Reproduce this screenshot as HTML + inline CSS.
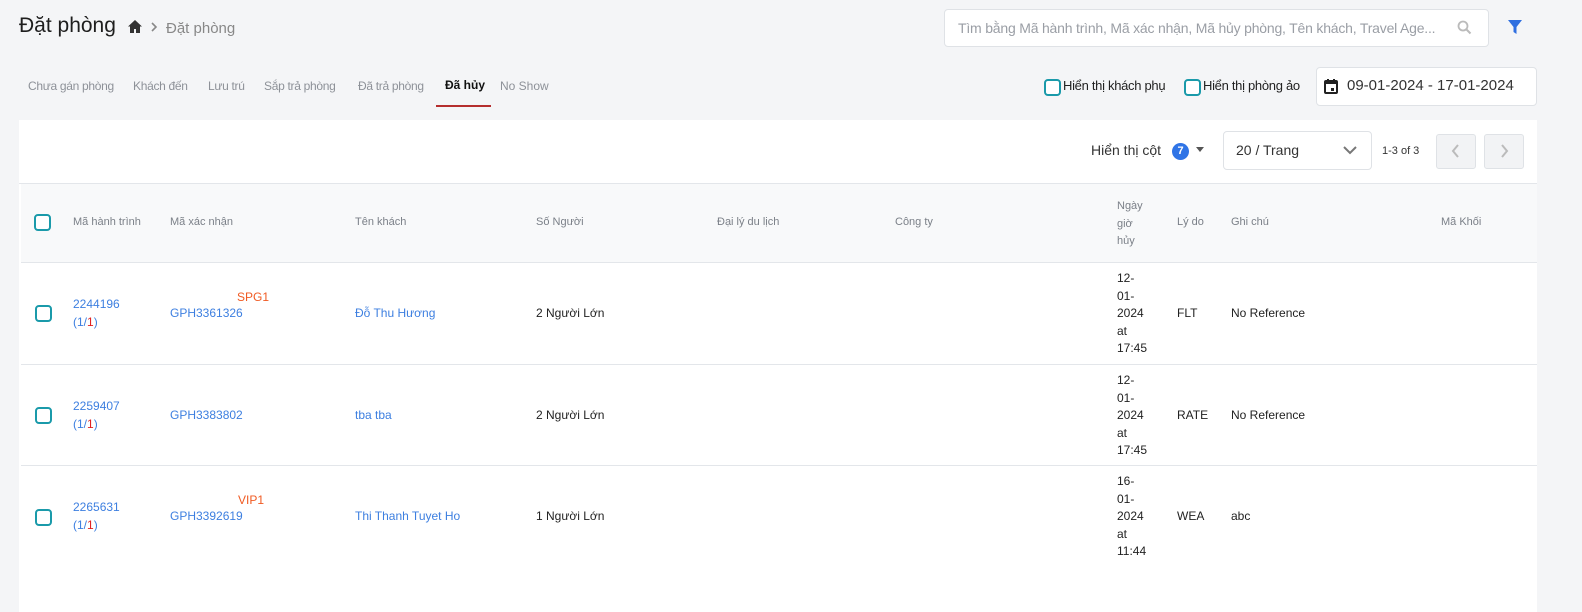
<!DOCTYPE html><html><head><meta charset="utf-8"><style>
*{box-sizing:border-box;margin:0;padding:0}
body{width:1582px;height:612px;overflow:hidden;background:#f4f5f7;font-family:"Liberation Sans",sans-serif;color:#222;position:relative}
.a{position:absolute;white-space:nowrap}
.cb{position:absolute;width:17px;height:17px;border:2px solid #1a9aaa;border-radius:4px;background:#fff}
.h{font-size:11px;color:#7b8088}
.t{font-size:12px;color:#222}
.lnk{color:#3d7fe0}
.line{position:absolute;left:21px;width:1516px;height:1px;background:#e3e6ea}
.cell{font-size:12px;line-height:17.5px}
</style></head><body>
<div class="a" style="left:19px;top:14px;font-size:21px;color:#1e1e1e">Đặt phòng</div>
<svg class="a" style="left:128px;top:20px" width="14" height="13" viewBox="0 0 14 13"><path d="M7 0L0 6.5h2V13h4V9h2v4h4V6.5h2z" fill="#333"/></svg>
<svg class="a" style="left:150px;top:22px" width="8" height="10" viewBox="0 0 8 10"><path d="M2 1l4 4-4 4" stroke="#888" stroke-width="1.6" fill="none"/></svg>
<div class="a" style="left:166px;top:20px;font-size:15px;color:#888">Đặt phòng</div>
<div class="a" style="left:944px;top:9px;width:545px;height:38px;background:#fff;border:1px solid #dfe2e6;border-radius:4px"></div>
<div class="a" style="left:958px;top:20px;font-size:14px;color:#9a9ea5;letter-spacing:-0.2px">Tìm bằng Mã hành trình, Mã xác nhận, Mã hủy phòng, Tên khách, Travel Age...</div>
<svg class="a" style="left:1457px;top:20px" width="15" height="15" viewBox="0 0 15 15"><circle cx="6" cy="6" r="4.5" stroke="#bbb" stroke-width="1.8" fill="none"/><path d="M9.5 9.5l4 4" stroke="#bbb" stroke-width="2"/></svg>
<svg class="a" style="left:1508px;top:20px" width="14" height="14" viewBox="0 0 14 14"><path d="M0 0h14L8.5 7v7l-3-2V7z" fill="#2f6fe0"/></svg>
<div class="a" style="left:28px;top:79px;font-size:12px;color:#8d9198;letter-spacing:-0.3px">Chưa gán phòng</div>
<div class="a" style="left:133px;top:79px;font-size:12px;color:#8d9198;letter-spacing:-0.3px">Khách đến</div>
<div class="a" style="left:208px;top:79px;font-size:12px;color:#8d9198;letter-spacing:-0.3px">Lưu trú</div>
<div class="a" style="left:264px;top:79px;font-size:12px;color:#8d9198;letter-spacing:-0.3px">Sắp trả phòng</div>
<div class="a" style="left:358px;top:79px;font-size:12px;color:#8d9198;letter-spacing:-0.3px">Đã trả phòng</div>
<div class="a" style="left:445px;top:78px;font-size:12px;color:#111;font-weight:bold">Đã hủy</div>
<div class="a" style="left:436px;top:105px;width:55px;height:2px;background:#b52e2e"></div>
<div class="a" style="left:500px;top:79px;font-size:12px;color:#8d9198">No Show</div>
<div class="cb" style="left:1044px;top:79px"></div>
<div class="a" style="left:1063px;top:78px;font-size:13px;color:#222;letter-spacing:-0.3px">Hiển thị khách phụ</div>
<div class="cb" style="left:1184px;top:79px"></div>
<div class="a" style="left:1203px;top:78px;font-size:13px;color:#222;letter-spacing:-0.3px">Hiển thị phòng ảo</div>
<div class="a" style="left:1316px;top:67px;width:221px;height:39px;background:#fff;border:1px solid #dfe2e6;border-radius:4px"></div>
<svg class="a" style="left:1324px;top:79px" width="14" height="15" viewBox="0 0 14 15"><rect x="1" y="2" width="12" height="12" rx="1" fill="none" stroke="#222" stroke-width="2"/><rect x="1" y="2" width="12" height="3" fill="#222"/><rect x="3" y="0" width="2" height="3" fill="#222"/><rect x="9" y="0" width="2" height="3" fill="#222"/><rect x="7" y="9" width="3" height="3" fill="#222"/></svg>
<div class="a" style="left:1347px;top:77px;font-size:15px;color:#333">09-01-2024 - 17-01-2024</div>
<div class="a" style="left:19px;top:120px;width:1518px;height:492px;background:#fff"></div>
<div class="a" style="left:1091px;top:142px;font-size:14px;color:#333">Hiển thị cột</div>
<div class="a" style="left:1172px;top:143px;width:17px;height:17px;border-radius:50%;background:#2f74e6;color:#fff;font-size:11px;font-weight:bold;text-align:center;line-height:17px">7</div>
<div class="a" style="left:1196px;top:147px;width:0;height:0;border-left:4px solid transparent;border-right:4px solid transparent;border-top:5px solid #555"></div>
<div class="a" style="left:1223px;top:131px;width:149px;height:39px;border:1px solid #dfe2e6;border-radius:4px"></div>
<div class="a" style="left:1236px;top:142px;font-size:14px;color:#333">20 / Trang</div>
<svg class="a" style="left:1343px;top:146px" width="14" height="9" viewBox="0 0 14 9"><path d="M1 1l6 6 6-6" stroke="#777" stroke-width="2" fill="none"/></svg>
<div class="a" style="left:1382px;top:145px;font-size:11px;color:#333">1-3 of 3</div>
<div class="a" style="left:1436px;top:134px;width:40px;height:35px;border:1px solid #dfe2e6;border-radius:3px;background:#f2f3f5"></div>
<svg class="a" style="left:1451px;top:144px" width="9" height="14" viewBox="0 0 9 14"><path d="M7 1L2 7l5 6" stroke="#bbb" stroke-width="2" fill="none"/></svg>
<div class="a" style="left:1484px;top:134px;width:40px;height:35px;border:1px solid #dfe2e6;border-radius:3px;background:#f2f3f5"></div>
<svg class="a" style="left:1500px;top:144px" width="9" height="14" viewBox="0 0 9 14"><path d="M2 1l5 6-5 6" stroke="#bbb" stroke-width="2" fill="none"/></svg>
<div class="a" style="left:19px;top:183px;width:1518px;height:1px;background:#e3e6ea"></div>
<div class="a" style="left:21px;top:184px;width:1516px;height:78px;background:#f8f9fa"></div>
<div class="line" style="top:262px"></div><div class="line" style="top:364px"></div><div class="line" style="top:465px"></div>
<div class="cb" style="left:34px;top:214px"></div>
<div class="a h" style="left:73px;top:216px">Mã hành trình</div>
<div class="a h" style="left:170px;top:216px">Mã xác nhận</div>
<div class="a h" style="left:355px;top:216px">Tên khách</div>
<div class="a h" style="left:536px;top:216px">Số Người</div>
<div class="a h" style="left:717px;top:216px">Đại lý du lịch</div>
<div class="a h" style="left:895px;top:216px">Công ty</div>
<div class="a h" style="left:1117px;top:198px;line-height:17.5px;white-space:normal;width:30px">Ngày giờ hủy</div>
<div class="a h" style="left:1177px;top:216px">Lý do</div>
<div class="a h" style="left:1231px;top:216px">Ghi chú</div>
<div class="a h" style="left:1441px;top:216px">Mã Khối</div>

<div class="cb" style="left:35px;top:305px"></div>
<div class="a cell lnk" style="left:73px;top:296px">2244196<br>(1/<span style="color:#e02020">1</span>)</div>
<div class="a" style="left:237px;top:290px;font-size:12px;color:#f05a22">SPG1</div>
<div class="a cell lnk" style="left:170px;top:305px">GPH3361326</div>
<div class="a cell lnk" style="left:355px;top:305px">Đỗ Thu Hương</div>
<div class="a cell" style="left:536px;top:305px">2 Người Lớn</div>
<div class="a cell" style="left:1117px;top:270px">12-<br>01-<br>2024<br>at<br>17:45</div>
<div class="a cell" style="left:1177px;top:305px">FLT</div>
<div class="a cell" style="left:1231px;top:305px">No Reference</div>

<div class="cb" style="left:35px;top:407px"></div>
<div class="a cell lnk" style="left:73px;top:398px">2259407<br>(1/<span style="color:#e02020">1</span>)</div>
<div class="a cell lnk" style="left:170px;top:407px">GPH3383802</div>
<div class="a cell lnk" style="left:355px;top:407px">tba tba</div>
<div class="a cell" style="left:536px;top:407px">2 Người Lớn</div>
<div class="a cell" style="left:1117px;top:372px">12-<br>01-<br>2024<br>at<br>17:45</div>
<div class="a cell" style="left:1177px;top:407px">RATE</div>
<div class="a cell" style="left:1231px;top:407px">No Reference</div>

<div class="cb" style="left:35px;top:509px"></div>
<div class="a cell lnk" style="left:73px;top:499px">2265631<br>(1/<span style="color:#e02020">1</span>)</div>
<div class="a" style="left:238px;top:493px;font-size:12px;color:#f05a22">VIP1</div>
<div class="a cell lnk" style="left:170px;top:508px">GPH3392619</div>
<div class="a cell lnk" style="left:355px;top:508px">Thi Thanh Tuyet Ho</div>
<div class="a cell" style="left:536px;top:508px">1 Người Lớn</div>
<div class="a cell" style="left:1117px;top:473px">16-<br>01-<br>2024<br>at<br>11:44</div>
<div class="a cell" style="left:1177px;top:508px">WEA</div>
<div class="a cell" style="left:1231px;top:508px">abc</div>
</body></html>
